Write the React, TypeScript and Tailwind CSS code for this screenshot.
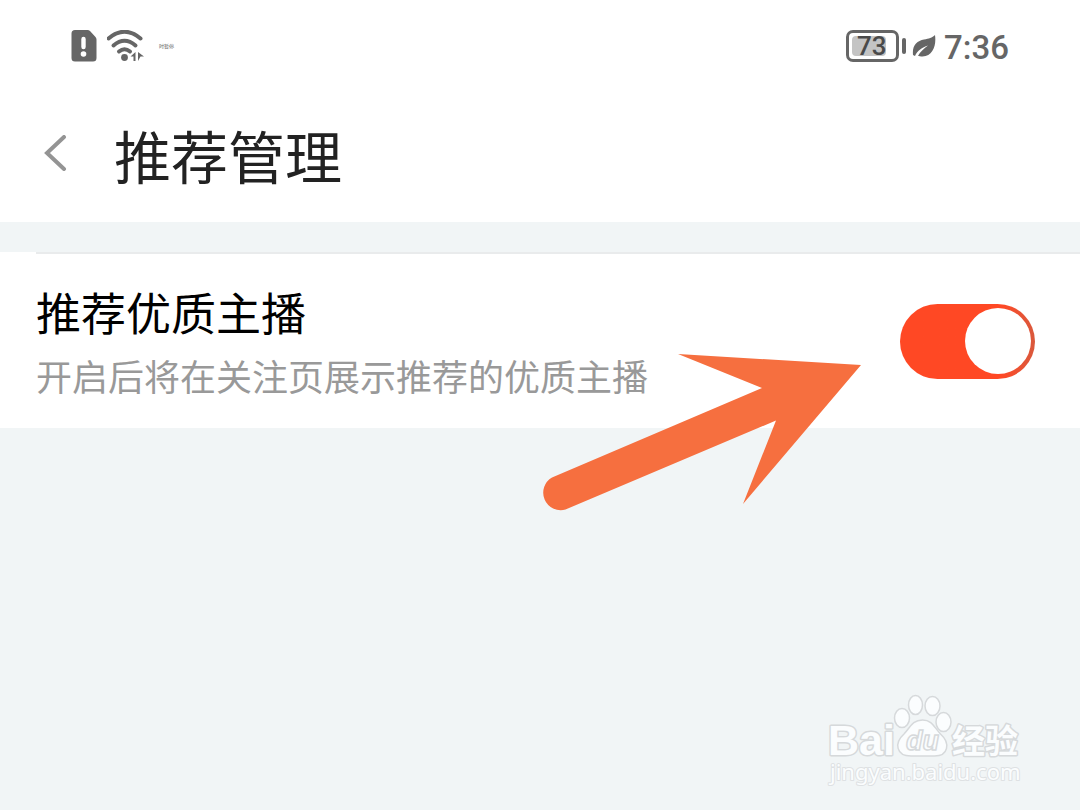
import { useState } from 'react';

function SimAlertIcon() {
  return (
    <svg className="h-8 w-[26px]" viewBox="0 0 26 32" aria-hidden="true">
      <path d="M4 0h12.500q1.500 0 2.500 1l5.500 6q1 1 1 2.500v18.500a3.500 3.500 0 0 1-3.500 3.500h-18a3.500 3.500 0 0 1-3.500-3.500v-24.500a3.500 3.500 0 0 1 3.500-3.500z" fill="#666" />
      <path d="M12.500 9v8" stroke="#fff" strokeWidth="4.400" strokeLinecap="round" />
      <circle cx="12.500" cy="24" r="2.800" fill="#fff" />
    </svg>
  );
}

function WifiIcon() {
  return (
    <svg className="h-8 w-[38px]" viewBox="0 0 38 32" fill="none" aria-hidden="true">
      <g stroke="#666" strokeWidth="4" strokeLinecap="round">
        <path d="M1.500 8.500q16-13.500 32 0" />
        <path d="M6.500 15.500q11-9.500 22 0" />
        <path d="M12 21.500q5.500-4.500 11 0" />
      </g>
      <circle cx="17.500" cy="27.500" r="3.400" fill="#666" />
      <path d="M23.500 26.500l5-4.500v9h-2v-4.500zM31 31v-9l6 4.500h-3.500z" fill="#666" />
    </svg>
  );
}

function StatusBar() {
  return (
    <div className="flex h-[92px] items-center justify-between pl-[71px] pr-[71px] text-[#666]">
      <div className="flex items-center gap-2.5">
        <SimAlertIcon />
        <WifiIcon />
        <span className="pl-1 font-['Noto_Sans_CJK_SC',sans-serif] text-[5px] leading-4">时暂停</span>
      </div>
      <div className="flex items-center">
        <div className="flex h-8 w-[53px] items-center rounded-[7px] border-3 border-[#666] p-[3px]">
          <span className="flex h-full w-[34px] items-center rounded-sm bg-[#c4c4c4] pl-[5px] font-['Roboto',sans-serif] text-[26px] leading-5 font-medium text-[#4a4a4a]">
            73
          </span>
        </div>
        <span className="ml-[3px] h-4 w-1 rounded-sm bg-[#666]" />
        <svg className="ml-1.5 h-6 w-6" viewBox="0 0 24 24" aria-hidden="true">
          <path d="M23 1c1.500 10-2 21-12.500 21.500-2 0-3.500-.3-4.500-.8C8.500 17.500 12 14.500 16 11.500 10 13.500 5.500 16.500 3 22l-2-1C0 11 5 7 12 5.500 17 4.500 20 4 23 1z" fill="#666" />
        </svg>
        <time className="ml-2 pt-1 font-['Roboto',sans-serif] text-[33px] leading-10 font-medium">7:36</time>
      </div>
    </div>
  );
}

function Pointer() {
  return (
    <svg className="pointer-events-none absolute right-[219px] top-[101px] h-[159px] w-80" viewBox="0 0 320 159" aria-hidden="true">
      <path d="M137 1L320 12 202 151 235 67.500 24.500 156.500A17.500 17.500 0 0 1 11 124.500L221 35z" fill="#f66f3f" />
    </svg>
  );
}

function Watermark() {
  return (
    <div className="pointer-events-none absolute bottom-5 right-[58px] w-48">
      <svg className="h-24 w-full overflow-visible" viewBox="0 0 192 96" aria-hidden="true">
        <g fill="#fbfdfe" stroke="#d6d9db" strokeWidth="1.500">
          <ellipse cx="72" cy="24" rx="7.500" ry="9.500" />
          <ellipse cx="85.500" cy="11" rx="7" ry="9.500" />
          <ellipse cx="102.500" cy="12" rx="7.500" ry="9.500" />
          <ellipse cx="113.500" cy="28" rx="7.500" ry="9.500" />
          <path d="M92.500 26c10 0 12 8 18 14 10 9 8 22-6 22H81c-15 0-17-13-7-22 6-6 8-14 18.500-14z" />
          <text x="76" y="56" fontSize="27" fontWeight="700" fontStyle="italic" fontFamily="Liberation Sans, sans-serif">du</text>
          <g paintOrder="stroke" strokeWidth="3" strokeLinejoin="round">
            <text x="-2" y="61" fontSize="43" fontWeight="700" fontFamily="Liberation Sans, sans-serif">Bai</text>
            <text x="122" y="59" fontSize="33" fontWeight="700" fontFamily="Noto Sans CJK SC, sans-serif">经验</text>
            <text x="0" y="86" fontSize="22" stroke="#dee1e3" strokeWidth="2" fontFamily="Noto Sans, sans-serif">jingyan.baidu.com</text>
          </g>
        </g>
      </svg>
    </div>
  );
}

export default function App() {
  const [enabled, setEnabled] = useState(true);

  return (
    <div className="relative min-h-screen bg-[#f1f5f6] font-['Noto_Sans_CJK_SC',sans-serif]">
      <header className="bg-white">
        <StatusBar />
        <div className="flex items-start gap-[46px] pb-8 pl-11 pt-[26px]">
          <button type="button" aria-label="返回" className="pt-[17px]">
            <svg className="h-9 w-6" viewBox="0 0 24 36" fill="none" aria-hidden="true">
              <path d="M20 2L3 18l17 16" stroke="#949494" strokeWidth="4" strokeLinecap="round" />
            </svg>
          </button>
          <h1 className="text-[57px] leading-[72px] text-[#222]">推荐管理</h1>
        </div>
      </header>

      <main className="relative mt-[30px] bg-white">
        <div className="ml-9 h-0.5 bg-[#e9ebec]" />
        <div className="flex items-center justify-between py-5 pl-9 pr-[45px]">
          <label htmlFor="recommend" className="block pt-2">
            <span className="block text-[45px] leading-[60px] text-black">推荐优质主播</span>
            <span className="block text-[36px] leading-[66px] text-[#999]">开启后将在关注页展示推荐的优质主播</span>
          </label>
          <span className="relative flex h-[75px] w-[135px] items-center rounded-full bg-[#d5d8da] has-checked:bg-linear-to-r has-checked:from-[#ff4824] has-checked:from-75% has-checked:to-[#d9583c]">
            <input
              id="recommend"
              type="checkbox"
              role="switch"
              checked={enabled}
              onChange={(e) => setEnabled(e.target.checked)}
              className="peer absolute inset-0 z-10 h-full w-full cursor-pointer opacity-0"
            />
            <span className="ml-1 h-[66px] w-[66px] rounded-full bg-white peer-checked:ml-[65px]" />
          </span>
        </div>
        <Pointer />
      </main>

      <Watermark />
    </div>
  );
}
